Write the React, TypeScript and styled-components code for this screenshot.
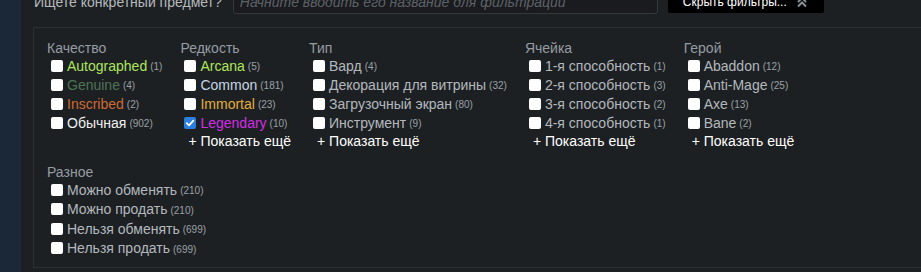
import React from "react";
import styled, { createGlobalStyle } from "styled-components";

const Global = createGlobalStyle`
  html, body { margin: 0; padding: 0; background: #1b2838; height: 272px; overflow: hidden; }
  body { font-family: Arial, "Liberation Sans", Helvetica, sans-serif; }
`;

const Main = styled.div`
  margin-left: 21px;
  background: #1d2023;
  height: 272px;
  overflow: hidden;
`;

const TopRow = styled.div`
  display: flex;
  align-items: center;
  height: 24px;
  margin-top: -10px;
  padding-left: 13px;
`;

const Prompt = styled.span`
  font-size: 14px;
  color: #b5babe;
  white-space: nowrap;
`;

const SearchInput = styled.input`
  box-sizing: border-box;
  margin-left: 11px;
  width: 425px;
  height: 24px;
  background: #191b1e;
  border: 1px solid #35383d;
  border-radius: 3px;
  padding: 0 6px;
  font-family: Arial, "Liberation Sans", sans-serif;
  font-size: 14px;
  font-style: italic;
  color: #c6d4df;
  outline: none;
  &::placeholder { color: #5e6268; }
`;

const HideButton = styled.button`
  margin-left: 10px;
  width: 156px;
  height: 23px;
  margin-top: -1px;
  background: #000;
  border: none;
  border-radius: 2px;
  color: #fff;
  font-family: Arial, "Liberation Sans", sans-serif;
  font-size: 12px;
  display: flex;
  align-items: center;
  padding: 0 0 0 15px;
  gap: 10px;
`;

const FilterBox = styled.div`
  margin: 13px 0 0 12px;
  border: 1px solid #2b2e32;
  border-right: none;
  padding: 12px 0 10px 13px;
  height: 241px;
  box-sizing: border-box;
  background: #1d2023;
`;

const Columns = styled.div`
  display: flex;
  gap: 18px;
  align-items: flex-start;
`;

const Column = styled.div<{ $top?: number }>`
  display: flex;
  flex-direction: column;
  margin-top: ${(p) => p.$top ?? 0}px;
`;

const Header = styled.div`
  font-size: 14px;
  line-height: 16px;
  color: #959ca2;
  white-space: nowrap;
`;

const Row = styled.label<{ $pitch: number }>`
  display: flex;
  align-items: center;
  height: ${(p) => p.$pitch}px;
  padding-left: 4px;
  white-space: nowrap;
`;

const Box = styled.span<{ $checked: boolean }>`
  width: 12px;
  height: 12px;
  border-radius: 2px;
  background: ${(p) => (p.$checked ? "#2b7fe0" : "#ffffff")};
  display: inline-flex;
  align-items: center;
  justify-content: center;
  flex: none;
  margin-right: 4px;
`;

const Name = styled.span<{ $color: string }>`
  font-size: 14px;
  color: ${(p) => p.$color};
`;

const Count = styled.span`
  font-size: 10px;
  color: #9aa0a6;
  margin-left: 3px;
  position: relative;
  top: 1px;
`;

const ShowMore = styled.div`
  font-size: 14px;
  line-height: 19px;
  color: #ffffff;
  padding-left: 8px;
  white-space: nowrap;
`;

type Item = { name: string; count: number; color: string; checked?: boolean };
type Group = { title: string; items: Item[]; more?: boolean };

const G = "#b3b8bd";

const groups: Group[] = [
  {
    title: "Качество",
    more: false,
    items: [
      { name: "Autographed", count: 1, color: "#ade55c" },
      { name: "Genuine", count: 4, color: "#4d7455" },
      { name: "Inscribed", count: 2, color: "#cf6a32" },
      { name: "Обычная", count: 902, color: "#f0f0f0" },
    ],
  },
  {
    title: "Редкость",
    more: true,
    items: [
      { name: "Arcana", count: 5, color: "#ade55c" },
      { name: "Common", count: 181, color: "#c8d6e6" },
      { name: "Immortal", count: 23, color: "#e4ae39" },
      { name: "Legendary", count: 10, color: "#d32ce6", checked: true },
    ],
  },
  {
    title: "Тип",
    more: true,
    items: [
      { name: "Вард", count: 4, color: G },
      { name: "Декорация для витрины", count: 32, color: G },
      { name: "Загрузочный экран", count: 80, color: G },
      { name: "Инструмент", count: 9, color: G },
    ],
  },
  {
    title: "Ячейка",
    more: true,
    items: [
      { name: "1-я способность", count: 1, color: G },
      { name: "2-я способность", count: 3, color: G },
      { name: "3-я способность", count: 2, color: G },
      { name: "4-я способность", count: 1, color: G },
    ],
  },
  {
    title: "Герой",
    more: true,
    items: [
      { name: "Abaddon", count: 12, color: G },
      { name: "Anti-Mage", count: 25, color: G },
      { name: "Axe", count: 13, color: G },
      { name: "Bane", count: 2, color: G },
    ],
  },
];

const misc: Group = {
  title: "Разное",
  items: [
    { name: "Можно обменять", count: 210, color: G },
    { name: "Можно продать", count: 210, color: G },
    { name: "Нельзя обменять", count: 699, color: G },
    { name: "Нельзя продать", count: 699, color: G },
  ],
};

const Check = () => (
  <svg width="10" height="10" viewBox="0 0 10 10">
    <path d="M1.8 5.2 L4 7.3 L8.3 2.6" fill="none" stroke="#fff" strokeWidth="1.8" strokeLinecap="round" strokeLinejoin="round" />
  </svg>
);

const Chevrons = () => (
  <svg width="10" height="12" viewBox="0 0 10 12">
    <path d="M1 6 L5 2 L9 6 M1 10.5 L5 6.5 L9 10.5" fill="none" stroke="#8a8f94" strokeWidth="2" />
  </svg>
);

const FilterGroup = ({ g, pitch, top }: { g: Group; pitch: number; top?: number }) => (
  <Column $top={top}>
    <Header>{g.title}</Header>
    {g.items.map((it) => (
      <Row key={it.name} $pitch={pitch}>
        <Box $checked={!!it.checked}>{it.checked && <Check />}</Box>
        <Name $color={it.color}>{it.name}</Name>
        <Count>({it.count})</Count>
      </Row>
    ))}
    {g.more && <ShowMore>+ Показать ещё</ShowMore>}
  </Column>
);

export default function App() {
  return (
    <>
      <Global />
      <Main>
        <TopRow>
          <Prompt>Ищете конкретный предмет?</Prompt>
          <SearchInput placeholder="Начните вводить его название для фильтрации" />
          <HideButton>
            Скрыть фильтры...
            <Chevrons />
          </HideButton>
        </TopRow>
        <FilterBox>
          <Columns>
            {groups.map((g) => (
              <FilterGroup key={g.title} g={g} pitch={19} />
            ))}
          </Columns>
          <Columns>
            <FilterGroup g={misc} pitch={19.5} top={13} />
          </Columns>
        </FilterBox>
      </Main>
    </>
  );
}
